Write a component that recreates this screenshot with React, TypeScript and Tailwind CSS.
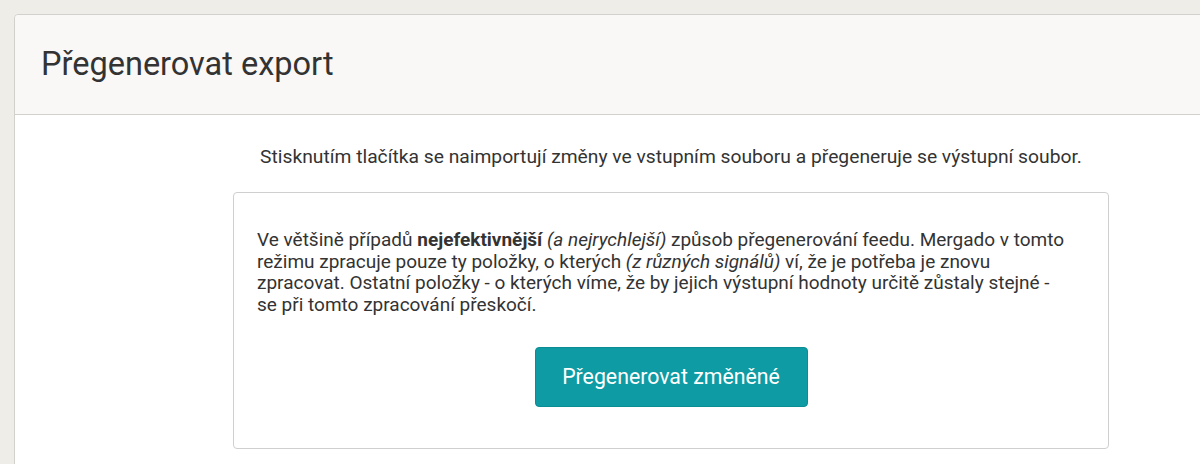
export default function App() {
  return (
    <div
      className="h-[464px] w-[1200px] overflow-hidden bg-[#efede8] pl-[14px] pt-[14px] text-[#333333]"
      style={{ fontFamily: 'Roboto, "Liberation Sans", sans-serif' }}
    >
      <div className="w-[1220px] rounded-t-[4px] border border-[#d3d1cc] bg-white">
        {/* Header */}
        <div className="flex h-[100px] items-center border-b border-[#d3d1cc] bg-[#f9f8f6] px-[26px] rounded-t-[4px]">
          <h1 className="text-[32.5px] font-normal leading-none text-[#333333]">Přegenerovat export</h1>
        </div>

        {/* Body */}
        <div className="pl-[218px] pb-[40px]">
          <div className="w-[876px] pt-[31px]">
            <p className="text-center text-[19.25px] leading-[22px]">
              Stisknutím tlačítka se naimportují změny ve vstupním souboru a přegeneruje se výstupní soubor.
            </p>

            <div className="mt-[24px] rounded-[4px] border border-[#cfcfcf] px-[23px] pt-[36px] pb-[41px]">
              <p className="max-w-[810px] text-[19px] leading-[21.5px]">
                Ve většině případů <strong className="font-bold">nejefektivnější</strong>{' '}
                <em>(a nejrychlejší)</em> způsob přegenerování feedu. Mergado v tomto režimu zpracuje pouze ty
                položky, o kterých <em>(z různých signálů)</em> ví, že je potřeba je znovu zpracovat. Ostatní
                položky - o kterých víme, že by jejich výstupní hodnoty určitě zůstaly stejné - se při tomto
                zpracování přeskočí.
              </p>

              <div className="mt-[32px] flex justify-center">
                <button
                  type="button"
                  className="h-[60px] w-[273px] rounded-[4px] border border-[#0b8d94] bg-[#0e9ba3] text-[21.3px] text-white"
                >
                  Přegenerovat změněné
                </button>
              </div>
            </div>
          </div>
        </div>
      </div>
    </div>
  );
}
